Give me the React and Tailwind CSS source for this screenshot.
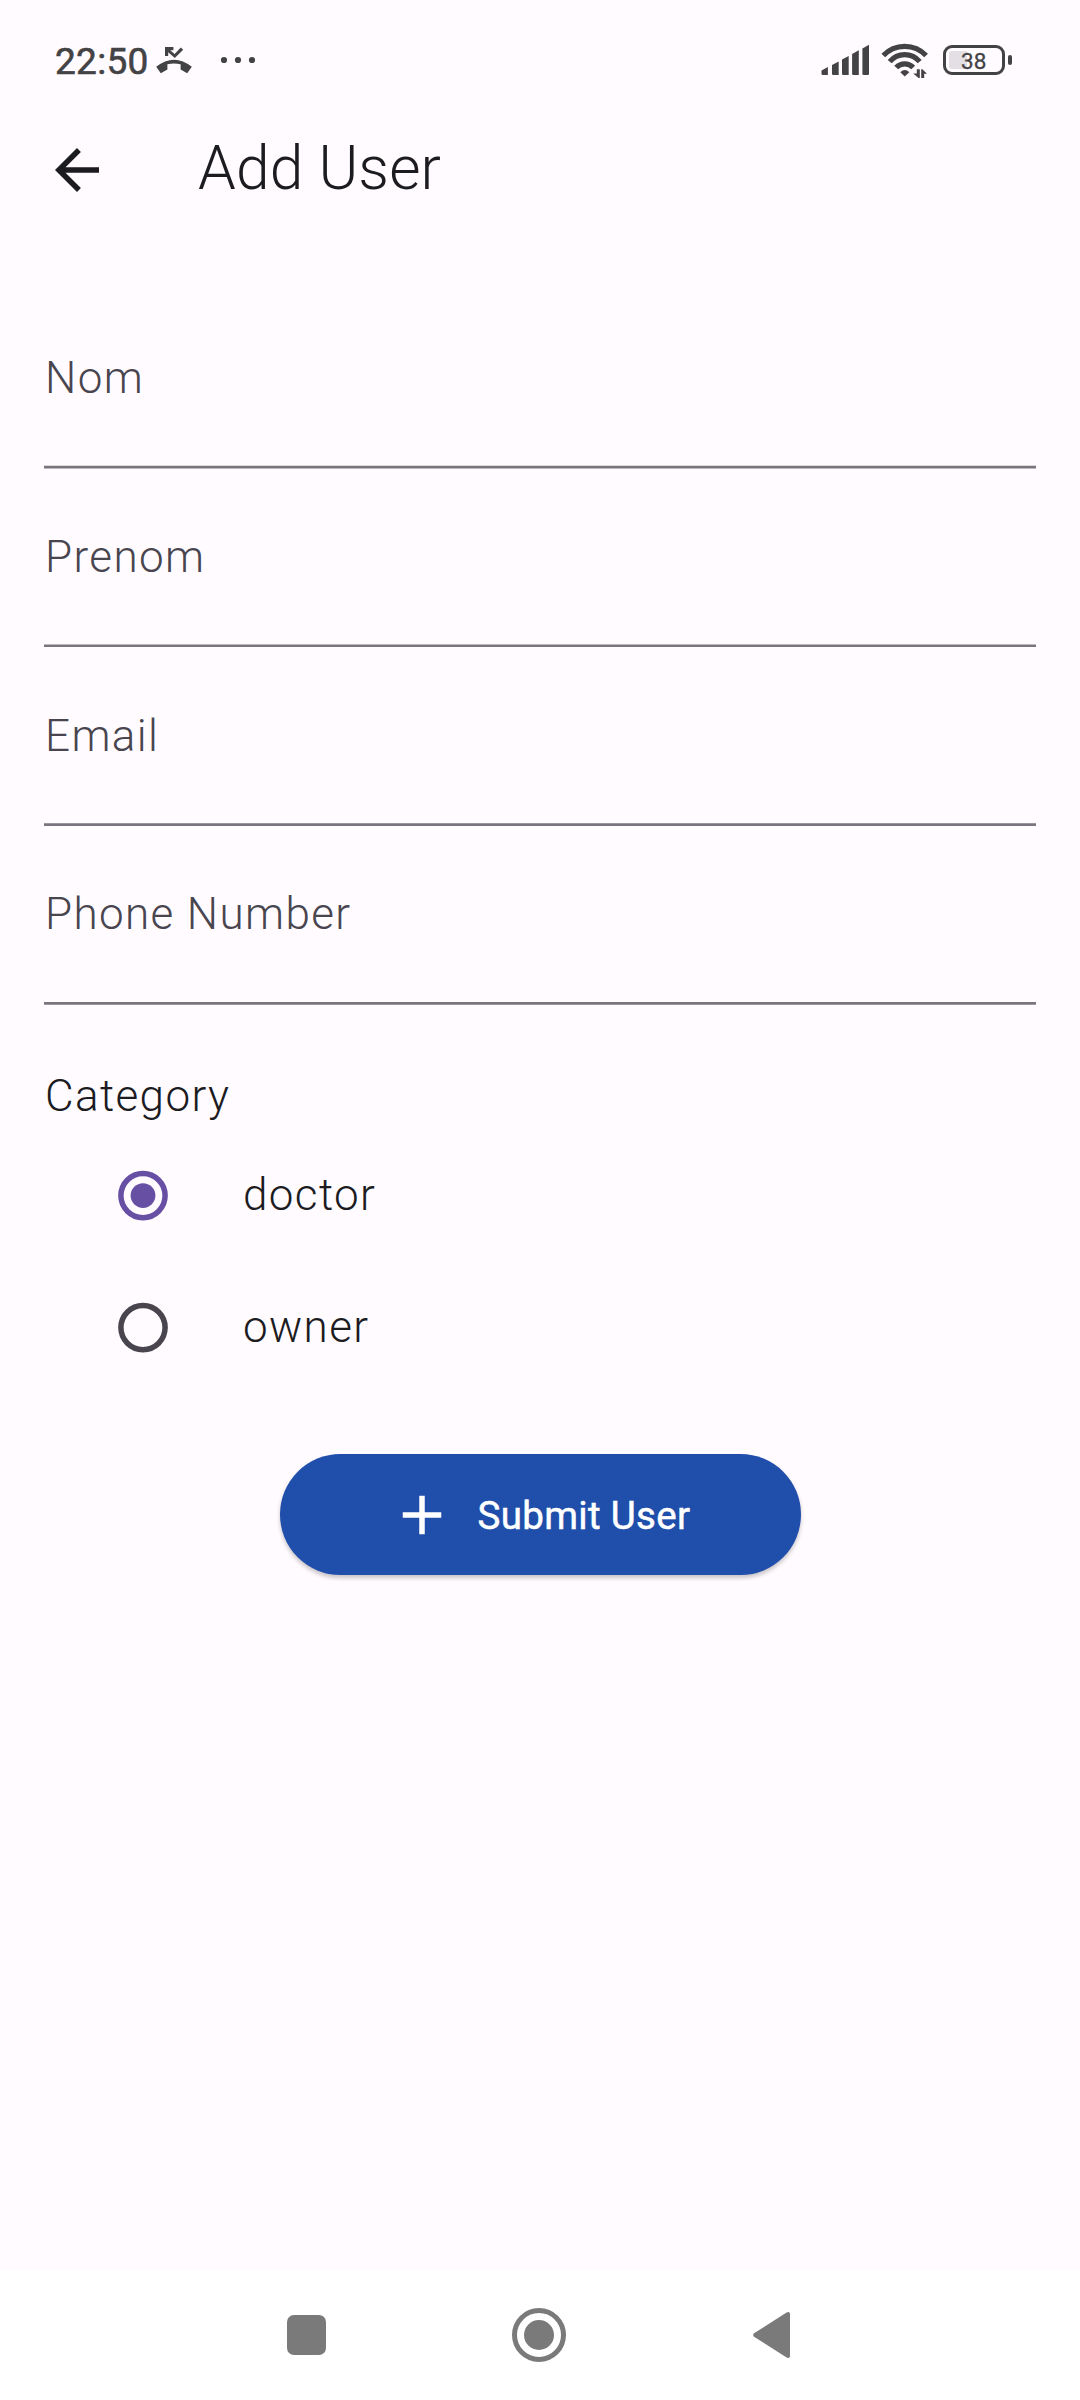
const FIELDS = [
  { text: "Nom", edge: "h-[4px] border-t border-b border-t-[#ddd8de] border-b-[#bcb8bf]", pad: "pt-[25px] h-[138px]" },
  { text: "Prenom", edge: "h-[3px] border-t border-t-[#bcb8bf]", pad: "pt-[62px] h-[175px]" },
  { text: "Email", edge: "h-[3px] border-t border-t-[#9b969f]", pad: "pt-[63px] h-[176px]" },
  { text: "Phone Number", edge: "h-[3px] border-b border-b-[#9b969f]", pad: "pt-[62px] h-[176px]" },
];

function StatusBar() {
  return (
    <header className="flex h-[122px] items-start justify-between pl-[55px] pr-[68px] text-[#434244]">
      <div className="flex h-[120px] items-center">
        <span className="w-[101px] pt-[3px] text-[37px] font-normal leading-[44px] tracking-[0.3px] [-webkit-text-stroke:0.6px_currentColor]">22:50</span>
        <svg className="h-[28px] w-[36px]" viewBox="0 0 36 28" fill="currentColor">
          <path d="M.2 20.8Q18 6.6 35.8 20.8L31.2 27.2L24.6 23.4V18.2Q18 16.8 11.4 18.2V23.4L4.8 27.2Z" />
          <path d="M9 1H17.4V4.2H14.2L18.6 8L24.8 1.6L27.2 3.8L18.8 12L12.2 6.3V10H9Z" />
        </svg>
        <svg className="ml-[28px] h-[8px] w-[36px]" viewBox="0 0 36 8" fill="currentColor">
          <circle cx="4" cy="4" r="3.1" />
          <circle cx="18" cy="4" r="3.1" />
          <circle cx="32" cy="4" r="3.1" />
        </svg>
      </div>
      <div className="flex h-[120px] items-center">
        <svg className="h-[32px] w-[50px]" viewBox="0 0 50 32" fill="currentColor">
          <path d="M.5 26.5 6.9 23V31H1.8Q.5 31 .5 29.7Z" />
          <path d="M11 21 17.7 17.5V31H12.3Q11 31 11 29.7Z" />
          <path d="M21 15.5 27.7 12V31H22.3Q21 31 21 29.7Z" />
          <path d="M31.1 10 37.8 6.3V31H32.4Q31.1 31 31.1 29.7Z" />
          <path d="M41.4 4.5 48 .7V29.7Q48 31 46.7 31H42.7Q41.4 31 41.4 29.7Z" />
        </svg>
        <svg className="ml-[9px] h-[36px] w-[48px]" viewBox="0 0 48 36" fill="none" stroke="currentColor" strokeWidth="5.2">
          <path d="M3.3 13.5A29.5 29.5 0 0 1 46.1 13.5" />
          <path d="M9.7 19.6A19.5 19.5 0 0 1 39.7 19.6" />
          <path d="M16.2 25.6A11.5 11.5 0 0 1 33.2 25.6" />
          <path d="M20.3 30.2Q24.8 25.6 29.3 30.2L24.8 34.6Z" fill="currentColor" stroke="none" />
          <path d="M36.8 27.3H39.8V36H38.6L33.2 31.4H36.8ZM41.2 27.3H42.4L47 31.8H44.2V36H41.2Z" fill="currentColor" stroke="none" />
        </svg>
        <div className="ml-[15px] flex items-center gap-[3px]">
          <div className="flex h-[30px] w-[62px] items-center rounded-[9px] border-[3px] border-current p-[3px]">
            <div className="flex h-[18px] w-[18px] items-center rounded-l-[3px] bg-[#e3dfe4]">
              <span className="ml-[12px] pt-[2px] text-[22.5px] leading-none [-webkit-text-stroke:0.3px_currentColor]">38</span>
            </div>
          </div>
          <div className="h-[10px] w-[4px] rounded-[2px] bg-current" />
        </div>
      </div>
    </header>
  );
}

function Field({ text, edge, pad }) {
  return (
    <div>
      <div className={`pl-[1px] text-[44px] font-light leading-[52px] tracking-[1.375px] text-[#49454f] ${pad}`}>{text}</div>
      <div className={`bg-[#79747e] ${edge}`} />
    </div>
  );
}

function Option({ text, checked }) {
  return (
    <label className="flex h-[132px] items-center pl-[74px]">
      <svg className="h-[52px] w-[50px]" viewBox="0 -1 50 52">
        <circle cx="25" cy="25.6" r="22.1" fill="none" strokeWidth="5.5" className={checked ? "stroke-[#6750a4]" : "stroke-[#49454f]"} />
        {checked && <circle cx="25" cy="25.6" r="12.4" className="fill-[#6750a4]" />}
      </svg>
      <span className="ml-[75px] text-[44px] font-light leading-[52px] tracking-[1.375px]">{text}</span>
    </label>
  );
}

export default function App() {
  return (
    <div className="flex h-[2400px] w-[1080px] flex-col overflow-hidden bg-[#fffbff] font-['Roboto',sans-serif] text-[#1c1b1f]">
      <StatusBar />
      <div className="flex h-[96px] items-center pl-[44px]">
        <svg className="h-[66px] w-[66px]" viewBox="0 0 24 24" fill="currentColor">
          <path d="M20 11H7.83l5.59-5.59L12 4l-8 8 8 8 1.41-1.41L7.83 13H20v-2z" />
        </svg>
        <h1 className="ml-[88px] pb-[3px] text-[60.5px] font-light leading-[76px] tracking-[0.15px]">Add User</h1>
      </div>
      <main className="flex flex-1 flex-col px-[44px] pt-[109px]">
        {FIELDS.map((f) => (
          <Field key={f.text} {...f} />
        ))}
        <div className="mt-[65px] h-[59px] pl-[1px] text-[44px] font-light leading-[52px] tracking-[1.375px]">Category</div>
        <Option text="doctor" checked />
        <Option text="owner" />
        <button className="mt-[61px] flex h-[121px] w-[521px] items-center self-center rounded-full bg-[#204eab] pl-[109px] text-[38.5px] font-normal tracking-[0.33px] text-white shadow-[0_3px_4px_rgba(0,0,0,0.22)]">
          <svg className="h-[66px] w-[66px]" viewBox="0 0 24 24" fill="currentColor">
            <path d="M19 13h-6v6h-2v-6H5v-2h6V5h2v6h6v2z" />
          </svg>
          <span className="ml-[23px] pt-[2px] [-webkit-text-stroke:0.5px_currentColor]">Submit User</span>
        </button>
      </main>
      <nav className="flex h-[130px] items-center bg-white pl-[287px] text-[#7a7a7a]">
        <div className="h-[40px] w-[39px] rounded-[7px] bg-current" />
        <div className="ml-[186px] flex h-[54px] w-[54px] items-center justify-center rounded-full border-[5px] border-current">
          <div className="h-[30px] w-[30px] rounded-full bg-current" />
        </div>
        <svg className="ml-[187px] h-[46px] w-[37px]" viewBox="0 0 37 46" fill="currentColor">
          <path d="M1 21.3 33.6.4Q37 -.8 37 2V44Q37 46.8 33.6 45.6L1 24.7Q-.7 23 1 21.3Z" />
        </svg>
      </nav>
    </div>
  );
}
